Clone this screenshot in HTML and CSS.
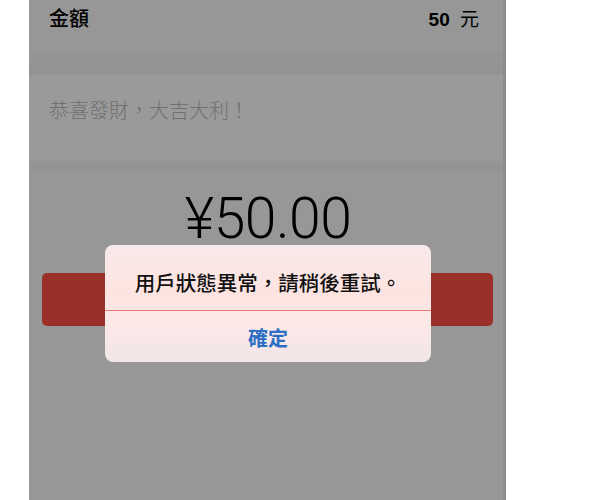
FILE: index.html
```html
<!DOCTYPE html>
<html lang="zh-Hant">
<head>
  <meta charset="UTF-8">
  <title>紅包</title>
  <link rel="stylesheet" href="styles.css">
</head>
<body>

<div class="page">
  <div class="phone">
    <div class="row-amount">
      <span class="label">金額</span>
      <span class="value"><b>50</b> 元</span>
    </div>
    <div class="band"></div>
    <div class="note">恭喜發財，大吉大利！</div>
    <div class="band thin"></div>
    <div class="total">¥50.00</div>
    <div class="send-btn"></div>

    <!-- alert over the page -->
    <div class="alert">
      <div class="alert-msg">用戶狀態異常，請稍後重試。</div>
      <div class="alert-btn">確定</div>
    </div>
  </div>
</div>

</body>
</html>
```

FILE: styles.css
```css
body {
  margin: 0;
  background: #fff;
  font-family: 'Noto Sans CJK TC', 'Noto Sans', sans-serif;
}

.page {
  display: flex;
  height: 500px;
  padding-left: 29px;
}

.phone {
  position: relative;
  width: 474px;
  height: 500px;
  background: #979797;
  border-right: 3px solid #8c8c8c;
}

.row-amount {
  display: flex;
  justify-content: space-between;
  height: 52px;
  padding: 4px 24px 0 20px;
  box-sizing: border-box;
  font-size: 20px;
  line-height: 28px;
  color: #000;
}

.row-amount .label {
  font-weight: 500;
}

.row-amount .value {
  font-size: 19px;
}

.row-amount .value b {
  font-family: 'Liberation Sans', sans-serif;
  margin-right: 6px;
}

.band {
  height: 23px;
  background: linear-gradient(180deg, #959595, #939393);
}

.band.thin {
  height: 9px;
}

.note {
  height: 86px;
  padding-left: 20px;
  box-sizing: border-box;
  background: #9a9a9a;
  color: #707070;
  font-size: 20px;
  font-weight: 300;
  line-height: 70px;
}

.total {
  margin-top: 14px;
  padding-left: 4px;
  text-align: center;
  font-family: Roboto, sans-serif;
  font-weight: 300;
  font-size: 57px;
  line-height: 70px;
  letter-spacing: -0.5px;
  color: #000;
}

.send-btn {
  margin: 19px 10px 0 13px;
  height: 53px;
  background: #9b302b;
  border-radius: 5px;
}

.alert {
  position: absolute;
  left: 76px;
  top: 245px;
  width: 326px;
  height: 117px;
  border-radius: 8px;
  background: linear-gradient(180deg, #f7eaea 0%, #fde3e0 40%, #fbe9e8 70%, #f1e5e6 100%);
  overflow: hidden;
}

.alert-msg {
  height: 65px;
  border-bottom: 1px solid #e2786c;
  text-align: center;
  font-size: 20.5px;
  line-height: 74px;
  color: #111;
  font-weight: 500;
}

.alert-btn {
  text-align: center;
  font-size: 20px;
  line-height: 54px;
  color: #2d6fc4;
  font-weight: bold;
}
```
